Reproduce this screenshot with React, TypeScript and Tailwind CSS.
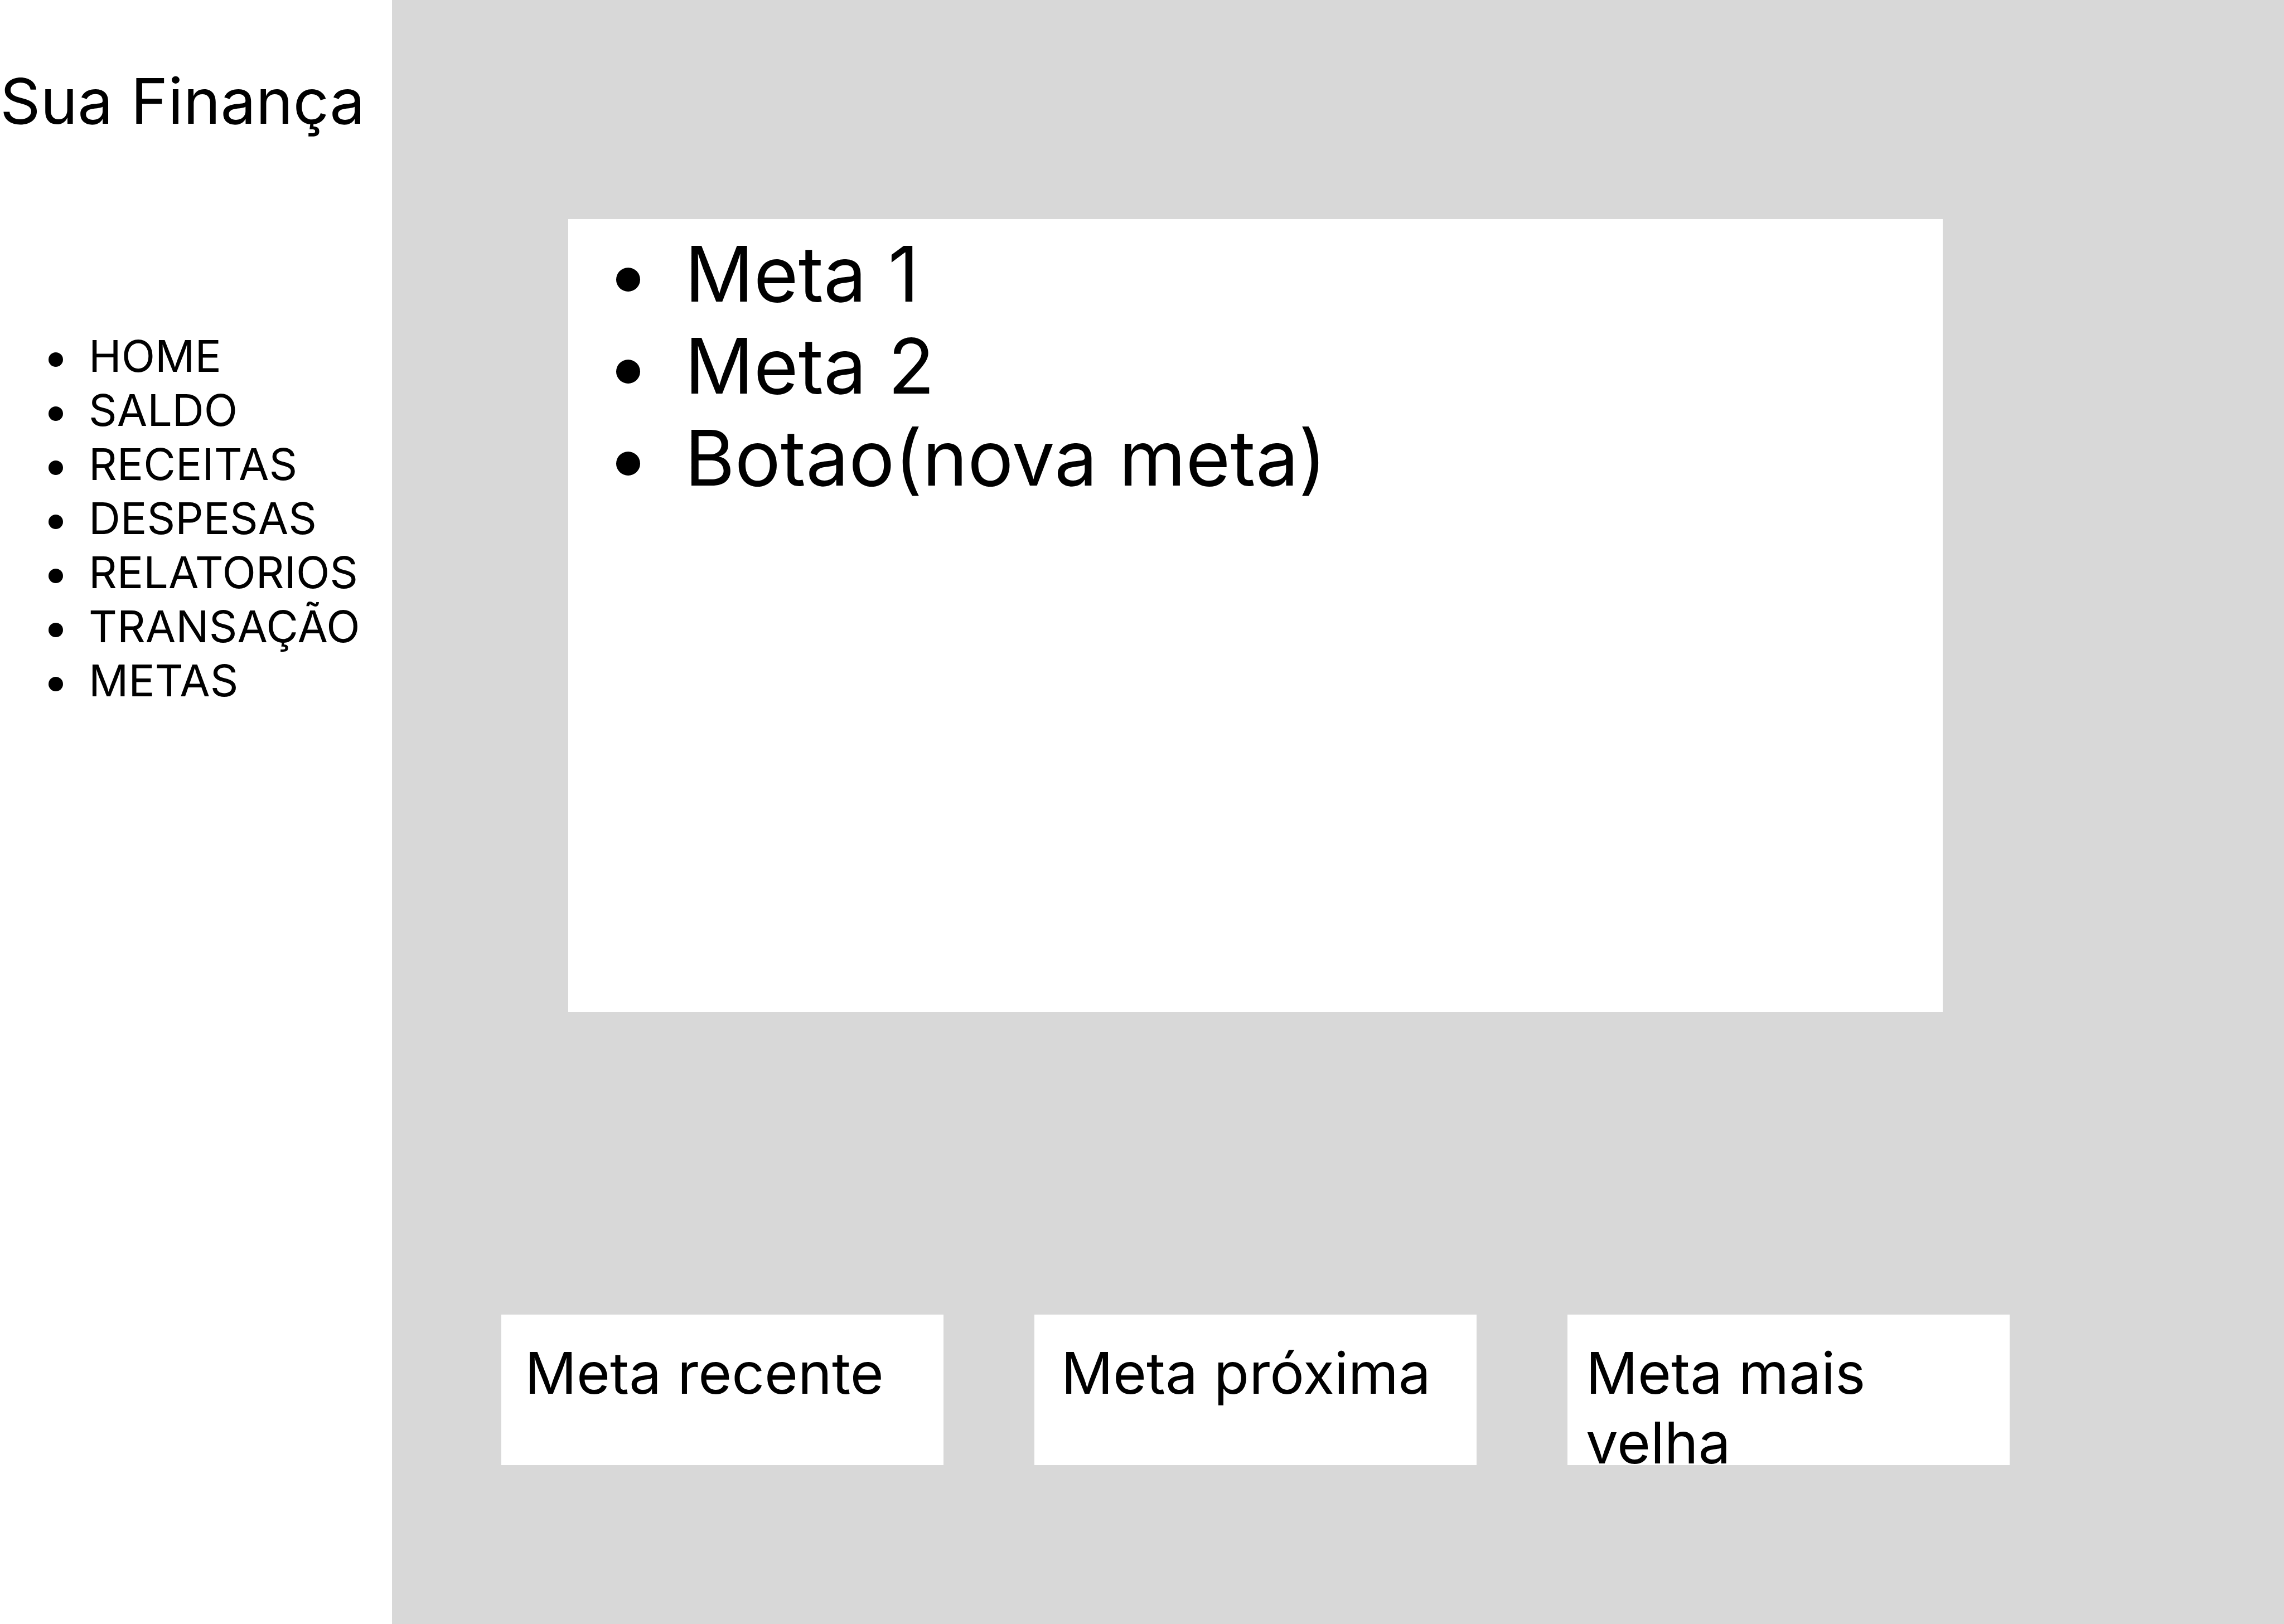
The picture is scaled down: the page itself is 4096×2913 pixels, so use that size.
const navItems = ["HOME", "SALDO", "RECEITAS", "DESPESAS", "RELATORIOS", "TRANSAÇÃO", "METAS"];

const goals = ["Meta 1", "Meta 2"];

const summaries = [
  { label: "Meta recente", inset: "pl-[42px]" },
  { label: "Meta próxima", inset: "pl-[48px]" },
  { label: "Meta mais velha", inset: "pl-[33px]" },
];

function GoalBullet() {
  return <span aria-hidden="true" className="mt-5 size-[43px] shrink-0 rounded-full bg-black" />;
}

function Sidebar() {
  return (
    <aside className="w-[703px] shrink-0 bg-white pt-28">
      <h1 className="text-[113px] leading-[138px] whitespace-nowrap">Sua Finança</h1>
      <nav aria-label="Principal" className="mt-[340px]">
        <ul className="pl-[87px] text-[79px] leading-[97px]">
          {navItems.map((item) => (
            <li key={item} className="flex items-center gap-[46px]">
              <span aria-hidden="true" className="mt-3 size-[26px] shrink-0 rounded-full bg-black" />
              <a href="#">{item}</a>
            </li>
          ))}
        </ul>
      </nav>
    </aside>
  );
}

export default function App() {
  return (
    <div className="flex min-h-screen bg-[#d8d8d8] font-['Inter',sans-serif] font-normal text-black">
      <Sidebar />
      <main className="flex min-w-0 flex-1 flex-col pt-[393px] pr-[492px] pb-[285px] pl-[196px]">
        <section aria-label="Metas" className="mx-[120px] min-h-[1422px] bg-white pt-4 pl-[86px]">
          <ul className="text-[137px] leading-[165px]">
            {goals.map((goal) => (
              <li key={goal} className="flex items-center gap-20">
                <GoalBullet />
                <span>{goal}</span>
              </li>
            ))}
            <li className="flex items-center gap-20">
              <GoalBullet />
              <button type="button">Botao(nova meta)</button>
            </li>
          </ul>
        </section>
        <section aria-label="Resumo" className="mt-[543px] grid grid-cols-3 gap-[163px]">
          {summaries.map(({ label, inset }) => (
            <article key={label} className={`h-[270px] bg-white pt-[42px] pr-8 ${inset}`}>
              <h2 className="text-[103px] leading-[125px]">{label}</h2>
            </article>
          ))}
        </section>
      </main>
    </div>
  );
}
